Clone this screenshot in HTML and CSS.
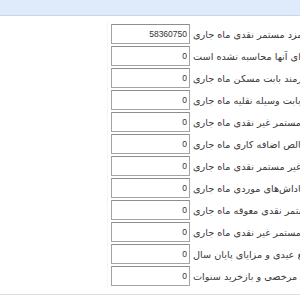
FILE: index.html
```html
<!DOCTYPE html>
<html lang="fa">
<head>
	<meta charset="UTF-8">
	<title>Document</title>
<link rel="stylesheet" href="styles.css">
</head>
<body>
	<div class="topbar"></div>
	<div class="form">
		<div class="row"><div class="pad"></div><input class="txt" type="text" value="58360750"><span class="lbl">دستمزد مستمر نقدی ماه جاری</span></div>
		<div class="row"><div class="pad"></div><input class="txt" type="text" value="0"><span class="lbl">مزایایی که بیمه برای آنها محاسبه نشده است</span></div>
		<div class="row"><div class="pad"></div><input class="txt" type="text" value="0"><span class="lbl">مبلغ دریافتی کارمند بابت مسکن ماه جاری</span></div>
		<div class="row"><div class="pad"></div><input class="txt" type="text" value="0"><span class="lbl">مبلغ دریافتی بابت وسیله نقلیه ماه جاری</span></div>
		<div class="row"><div class="pad"></div><input class="txt" type="text" value="0"><span class="lbl">مزایای مستمر غیر نقدی ماه جاری</span></div>
		<div class="row"><div class="pad"></div><input class="txt" type="text" value="0"><span class="lbl">مبلغ ناخالص اضافه کاری ماه جاری</span></div>
		<div class="row"><div class="pad"></div><input class="txt" type="text" value="0"><span class="lbl">مزایای غیر مستمر نقدی ماه جاری</span></div>
		<div class="row"><div class="pad"></div><input class="txt" type="text" value="0"><span class="lbl">پاداش‌های موردی ماه جاری</span></div>
		<div class="row"><div class="pad"></div><input class="txt" type="text" value="0"><span class="lbl">مزایای مستمر نقدی معوقه ماه جاری</span></div>
		<div class="row"><div class="pad"></div><input class="txt" type="text" value="0"><span class="lbl">مزایای مستمر غیر نقدی ماه جاری</span></div>
		<div class="row"><div class="pad"></div><input class="txt" type="text" value="0"><span class="lbl">مبلغ عیدی و مزایای پایان سال</span></div>
		<div class="row"><div class="pad"></div><input class="txt" type="text" value="0"><span class="lbl">بازخرید مرخصی و بازخرید سنوات</span></div>
	</div>
	<div class="foot"></div>
</body>
</html>
```

FILE: styles.css
```css
html,body{margin:0;padding:0;overflow:hidden;background:#fff;}
body{font-family:"DejaVu Sans",sans-serif;font-size:9.7px;color:#3a3a3a;}
.topbar{height:15px;background:#dfeafa;border-bottom:1px solid #c9d6e6;}
.form{padding-top:7px;}
.row{display:flex;align-items:center;height:22px;}
.pad{width:107px;align-self:stretch;border-right:1px dotted #eeeeee;flex:none;}
.txt{flex:none;box-sizing:border-box;width:79px;height:20px;margin:0 0 0 3px;padding:0 2px;border:1px solid #a3a3a3;border-top-color:#8e8e8e;font-family:"Liberation Sans",sans-serif;font-size:8.5px;color:#333;text-align:right;direction:ltr;outline:none;}
.lbl{flex:none;white-space:nowrap;direction:rtl;margin-left:3px;}
.foot{margin-top:7px;border-top:1px solid #d6e1ed;height:8px;}
```
